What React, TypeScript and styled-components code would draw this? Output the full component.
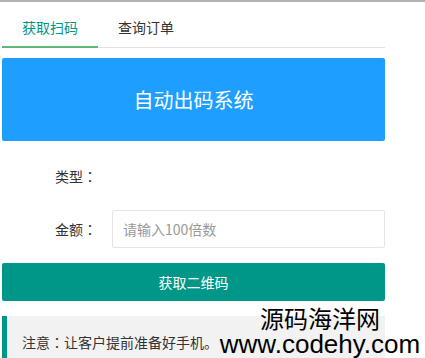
import React from 'react'
import styled, { createGlobalStyle } from 'styled-components'

const GlobalStyle = createGlobalStyle`
  body {
    margin: 0;
    background: #fff;
    font-family: "Noto Sans CJK SC", "Liberation Sans", sans-serif;
    font-size: 14px;
    color: #333;
  }
  * { box-sizing: border-box; }
`

const Page = styled.div`
  position: relative;
  height: 358px;
  overflow: hidden;
  border-top: 2px solid #b2b2b2;
  padding: 5px 0 0 2px;
`

const Panel = styled.div`
  width: 383px;
`

const TabBar = styled.ul`
  display: flex;
  margin: 0;
  padding: 0;
  list-style: none;
  height: 41px;
  border-bottom: 1px solid #e2e2e2;
`

const Tab = styled.li<{ active?: boolean }>`
  position: relative;
  padding: 0 20px;
  line-height: 40px;
  color: ${p => (p.active ? '#009688' : '#333')};

  &::after {
    content: '';
    display: ${p => (p.active ? 'block' : 'none')};
    position: absolute;
    left: 0;
    right: 0;
    bottom: -1px;
    height: 2px;
    background: #5fb878;
  }
`

const Banner = styled.div`
  margin-top: 10px;
  height: 83px;
  border-radius: 2px;
  background: #1e9fff;
  color: #fff;
  font-size: 20px;
  display: flex;
  align-items: center;
  justify-content: center;
`

const FormRow = styled.div<{ gap: number }>`
  display: flex;
  margin-top: ${p => p.gap}px;
  height: 38px;
`

const Label = styled.label`
  width: 110px;
  padding: 9px 15px;
  line-height: 20px;
  text-align: right;
  color: #333;
`

// centred full-width colon, as the reference font draws it
const Colon = styled.span`
  font-family: "Noto Sans CJK TC", "Noto Sans CJK SC", sans-serif;
`

const Input = styled.input`
  flex: 1;
  height: 38px;
  padding-left: 10px;
  border: 1px solid #e6e6e6;
  border-radius: 2px;
  font-family: inherit;
  font-size: 14px;
  outline: none;

  &::placeholder {
    color: #999;
  }
`

const SubmitButton = styled.button`
  display: block;
  width: 100%;
  height: 38px;
  margin-top: 15px;
  border: none;
  border-radius: 2px;
  background: #009688;
  color: #fff;
  font-family: inherit;
  font-size: 14px;
`

const Quote = styled.div`
  margin-top: 15px;
  padding: 15px;
  line-height: 22px;
  border-left: 5px solid #009688;
  background: #f2f2f2;
  color: #333;
`

const Watermark = styled.div`
  position: absolute;
  left: 216px;
  top: 303px;
  width: 208px;
  display: flex;
  flex-direction: column;
  align-items: center;
  color: #000;
`

const MarkTitle = styled.span`
  font-size: 24px;
  line-height: 26px;
`

const MarkUrl = styled.span`
  font-family: "Liberation Sans", Arial, sans-serif;
  font-size: 26px;
  line-height: 26px;
`

export default function App() {
  return (
    <Page>
      <GlobalStyle />
      <Panel>
        <TabBar>
          <Tab active>获取扫码</Tab>
          <Tab>查询订单</Tab>
        </TabBar>

        <Banner>自动出码系统</Banner>

        <FormRow gap={16}>
          <Label>类型<Colon>：</Colon></Label>
        </FormRow>

        <FormRow gap={15}>
          <Label>金额<Colon>：</Colon></Label>
          <Input placeholder="请输入100倍数" />
        </FormRow>

        <SubmitButton>获取二维码</SubmitButton>

        <Quote>注意<Colon>：</Colon>让客户提前准备好手机。</Quote>
      </Panel>

      <Watermark>
        <MarkTitle>源码海洋网</MarkTitle>
        <MarkUrl>www.codehy.com</MarkUrl>
      </Watermark>
    </Page>
  )
}
